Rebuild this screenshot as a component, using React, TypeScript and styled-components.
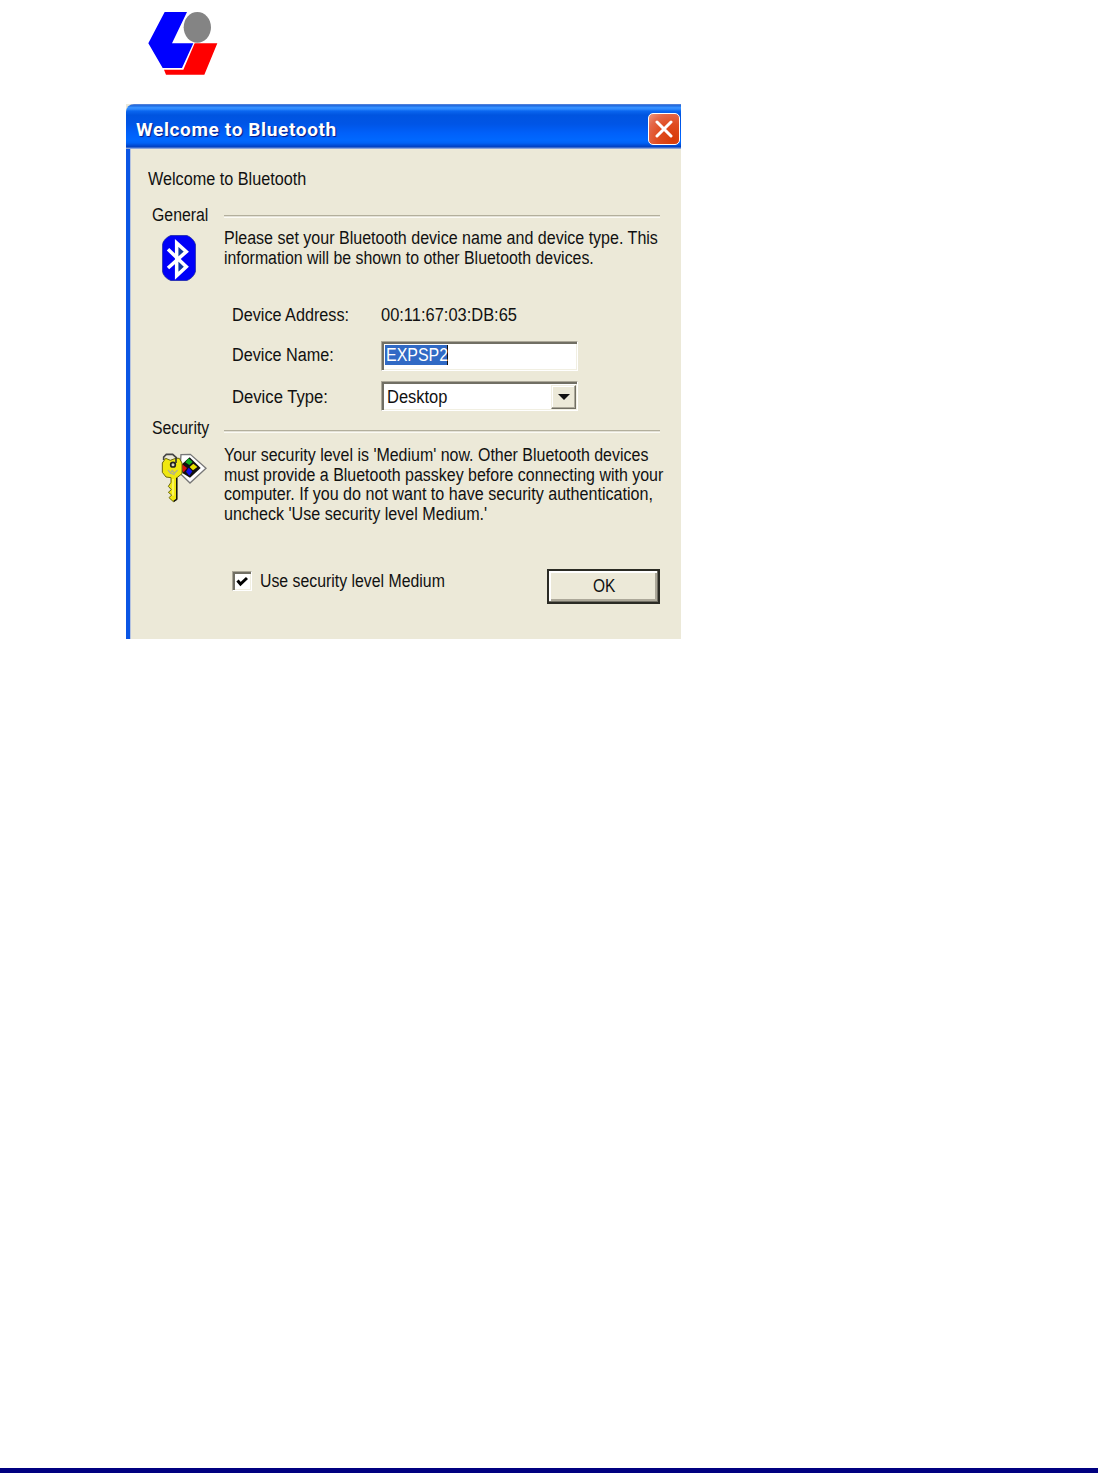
import React from "react";
import styled, { createGlobalStyle } from "styled-components";

const GlobalStyle = createGlobalStyle`
  * { box-sizing: border-box; }
  body { margin: 0; background: #fff; }
`;

const Page = styled.div`
  display: flex;
  flex-direction: column;
  width: 1098px;
  height: 1473px;
  overflow: hidden;
  font: 18px/20px "Liberation Sans", Arial, sans-serif;
  color: #111;
`;

const PageHeader = styled.header`
  flex: none;
  height: 104px;
  padding: 12px 0 0 148px;
  svg { display: block; }
`;

const PageFooter = styled.footer`
  flex: none;
  height: 5px;
  margin-top: auto;
  background: #000080;
`;

const Dialog = styled.section`
  flex: none;
  width: 555px;
  height: 535px;
  margin-left: 126px;
  display: flex;
  flex-direction: column;
  background: #ece9d8;
`;

const TitleBar = styled.div`
  flex: none;
  height: 45px;
  padding: 4px 1px 0 10px;
  display: flex;
  align-items: center;
  justify-content: space-between;
  border-top-left-radius: 8px;
  background: linear-gradient(
    to bottom,
    #6088d8 0, #1464e0 2px, #3a92ff 3px, #2f8bff 5px, #0a66f0 7px,
    #0054e0 11px, #0055e6 20px, #0060fa 29px, #0068ff 36px, #0062f6 39px,
    #0046cc 42px, #0040c0 43px, #6f92d8 44px, #a9b9dc 45px
  );
`;

const Title = styled.h1`
  margin: 0;
  padding-top: 2px;
  font: bold 19px/22px Roboto, "Open Sans", sans-serif;
  letter-spacing: 0.64px;
  white-space: nowrap;
  color: #fff;
  text-shadow: 1px 1px 1px #0a1883;
`;

const CloseButton = styled.button`
  width: 32px;
  height: 32px;
  padding: 0;
  display: grid;
  place-items: center;
  border: 1.5px solid #fff;
  border-radius: 5px;
  background: radial-gradient(circle at 80% 85%, #d83c08 0, #e04c20 45%, #e4684a 75%, #ec9880 100%);
`;

const Content = styled.div`
  flex: 1;
  display: flex;
  flex-direction: column;
  border-left: 4px solid #0a55e4;
  box-shadow: inset 1px 0 0 #b5c3e0;
  padding: 20px 0 0 18px;
`;

const Text = styled.span<{ $fit?: number }>`
  display: block;
  height: 20px;
  white-space: nowrap;
  transform: scaleX(${(p) => p.$fit ?? 0.89});
  transform-origin: left center;
`;

const GroupHeader = styled.div<{ $gap: number; $rule: number }>`
  display: grid;
  grid-template-columns: 72.5px 436px;
  margin-top: ${(p) => p.$gap}px;
  padding-left: 3.5px;
  height: 20px;
  hr {
    width: 436px;
    height: 3px;
    margin: ${(p) => p.$rule}px 0 0;
    border: 0;
    background: linear-gradient(#b3af9c 0 1.3px, #fbfaf4 1.6px 3px);
  }
`;

const GroupIntro = styled.div<{ $gap: number; $height: number }>`
  display: grid;
  grid-template-columns: 76px 1fr;
  height: ${(p) => p.$height}px;
  margin-top: ${(p) => p.$gap}px;
`;

const IconSlot = styled.div<{ $left: number; $top: number }>`
  padding: ${(p) => p.$top}px 0 0 ${(p) => p.$left}px;
  svg { display: block; }
`;

const Paragraph = styled.div`
  display: grid;
  grid-auto-rows: 19.6px;
  width: 440px;
`;

const Fields = styled.div`
  display: grid;
  grid-template-columns: 149px 197px;
  padding-left: 84px;
`;

const FieldLabel = styled(Text)<{ $drop?: number }>`
  margin-top: ${(p) => p.$drop ?? 0}px;
`;

const TextInput = styled.div`
  height: 30px;
  padding: 3px 0 0 3px;
  margin-top: 16px;
  background: #fff;
  border: 1px solid;
  border-color: #aca899 #fff #fff #aca899;
  box-shadow: inset 1px 1px 0 1px #716f64, inset -1px -1px 0 #f1efe2;
`;

const Selection = styled.div`
  width: 63px;
  height: 20px;
  padding-left: 1px;
  background: #316ac5;
  color: #fff;
  border-right: 1px solid #111;
`;

const Combo = styled(TextInput)`
  display: flex;
  justify-content: space-between;
  align-items: center;
  margin-top: 10px;
  padding: 3px 1px 1px 5px;
`;

const ComboButton = styled.span`
  width: 25px;
  height: 24px;
  display: grid;
  place-items: center;
  background: #ece9d8;
  border: 1px solid;
  border-color: #f1efe2 #716f64 #716f64 #f1efe2;
  box-shadow: inset -1px -1px 0 #aca899, inset 1px 1px 0 #fff;
`;

const Actions = styled.div`
  display: flex;
  align-items: flex-start;
  justify-content: space-between;
  padding: 0 21px 0 84px;
`;

const CheckLabel = styled.label`
  display: flex;
  gap: 8px;
  padding-top: 2px;
`;

const CheckBox = styled.span`
  width: 20px;
  height: 20px;
  display: grid;
  place-items: center;
  background: #fff;
  border: 1px solid;
  border-color: #aca899 #fff #fff #aca899;
  box-shadow: inset 1px 1px 0 1px #716f64, inset -1px -1px 0 #f1efe2;
`;

const OkButton = styled.button`
  width: 113px;
  height: 35px;
  padding: 0 0 1px 44px;
  font: inherit;
  color: #111;
  text-align: left;
  background: #ece9d8;
  border: 2px solid #2b2b24;
  border-radius: 0;
  box-shadow: inset -1px -1px 0 #716f64, inset 2px 2px 0 #fff, inset -3px -3px 0 #aca899;
`;

const Logo = () => (
  <svg width="70" height="63" viewBox="36 36 210 189">
    <path d="M86 36H153L108 130H172L138 204H80L37 130Z" fill="#0000ff" />
    <path d="M176 130H244L205 224H90L84 209H142Z" fill="#ff0000" />
    <ellipse cx="184" cy="82" rx="41" ry="46" fill="#848484" />
  </svg>
);

const BluetoothIcon = () => (
  <svg width="34" height="46" viewBox="69 106 102 138">
    <path d="M96 107H143Q152 110 160 118T170 136V214Q168 224 160 232T143 243H96Q87 240 79 232T70 214V136Q71 126 79 118T96 107Z" fill="#0000f8" stroke="#24348c" strokeWidth="2" />
    <path d="M112 127L142 156L112 180L142 202L112 231Z" fill="#123a9c" />
    <path d="M87 149L142 201L113 228V130L142 156L87 205" fill="none" stroke="#fff" strokeWidth="10.5" />
  </svg>
);

const KeysIcon = () => (
  <svg width="46" height="50" viewBox="34 24 138 150">
    <path d="M94 29L122 28L169 70L121 114L90 84Z" fill="#fff" stroke="#777" strokeWidth="4" />
    <path d="M94 60L120 37L153 69L121 98L98 84Z" fill="#111" />
    <path d="M117 40L129 51L119 60L107 52Z" fill="#0fae22" />
    <path d="M98 58L112 69L102 82L96 74Z" fill="#d81010" />
    <path d="M131 56L143 66L130 76L120 66Z" fill="#e8e000" />
    <path d="M117 68L128 79L119 92L109 80Z" fill="#1010e8" />
    <path d="M42 45V36L50 28H69L80 38V60" fill="none" stroke="#444" strokeWidth="5" />
    <path
      d="M48 40L62 46L78 40H89L97 54V86L82 98V163L71 170L58 158L66 150L56 142L65 134L56 124L64 112V98L49 96L38 82V54Z"
      fill="#f0e810" stroke="#6b6810" strokeWidth="3"
    />
    <path d="M81 98V163L72 169" fill="none" stroke="#111" strokeWidth="4" />
    <path d="M70 102V152" stroke="#fbf870" strokeWidth="5" />
    <circle cx="70" cy="59" r="7" fill="#d8d8c0" stroke="#222" strokeWidth="5" />
    <path d="M79 38V54" fill="none" stroke="#333" strokeWidth="5" />
    <path d="M55 75L62 84L68 76L74 85L84 75M60 82L75 90" fill="none" stroke="#b5b488" strokeWidth="4" />
  </svg>
);

export default function App() {
  return (
    <Page>
      <GlobalStyle />
      <PageHeader><Logo /></PageHeader>
      <Dialog>
        <TitleBar>
          <Title>Welcome to Bluetooth</Title>
          <CloseButton aria-label="Close">
            <svg width="18" height="18" viewBox="0 0 18 18">
              <path d="M2 2L16 16M16 2L2 16" stroke="#fff" strokeWidth="3" strokeLinecap="round" />
            </svg>
          </CloseButton>
        </TitleBar>
        <Content>
          <Text $fit={0.9}>Welcome to Bluetooth</Text>
          <GroupHeader $gap={16} $rule={10}>
            <Text $fit={0.88}>General</Text>
            <hr />
          </GroupHeader>
          <GroupIntro $gap={3} $height={77}>
            <IconSlot $left={14} $top={7}><BluetoothIcon /></IconSlot>
            <Paragraph>
              <Text $fit={0.891}>Please set your Bluetooth device name and device type. This</Text>
              <Text $fit={0.882}>information will be shown to other Bluetooth devices.</Text>
            </Paragraph>
          </GroupIntro>
          <Fields>
            <FieldLabel $fit={0.9}>Device Address:</FieldLabel>
            <Text $fit={0.914}>00:11:67:03:DB:65</Text>
            <FieldLabel $fit={0.9} $drop={20}>Device Name:</FieldLabel>
            <TextInput><Selection><Text $fit={0.886}>EXPSP2</Text></Selection></TextInput>
            <FieldLabel $fit={0.925} $drop={16}>Device Type:</FieldLabel>
            <Combo>
              <Text $fit={0.915}>Desktop</Text>
              <ComboButton>
                <svg width="12" height="6" viewBox="0 0 12 6"><path d="M0 0H12L6 6Z" fill="#111" /></svg>
              </ComboButton>
            </Combo>
          </Fields>
          <GroupHeader $gap={7} $rule={12}>
            <Text $fit={0.88}>Security</Text>
            <hr />
          </GroupHeader>
          <GroupIntro $gap={7} $height={124}>
            <IconSlot $left={13} $top={8}><KeysIcon /></IconSlot>
            <Paragraph>
              <Text $fit={0.887}>Your security level is 'Medium' now. Other Bluetooth devices</Text>
              <Text $fit={0.887}>must provide a Bluetooth passkey before connecting with your</Text>
              <Text $fit={0.895}>computer. If you do not want to have security authentication,</Text>
              <Text $fit={0.895}>uncheck 'Use security level Medium.'</Text>
            </Paragraph>
          </GroupIntro>
          <Actions>
            <CheckLabel>
              <CheckBox>
                <svg width="12" height="11" viewBox="0 0 12 11">
                  <path d="M1.5 4.5L4.5 8L11 2" fill="none" stroke="#000" strokeWidth="3" />
                </svg>
              </CheckBox>
              <Text $fit={0.88}>Use security level Medium</Text>
            </CheckLabel>
            <OkButton><Text $fit={0.86}>OK</Text></OkButton>
          </Actions>
        </Content>
      </Dialog>
      <PageFooter />
    </Page>
  );
}
